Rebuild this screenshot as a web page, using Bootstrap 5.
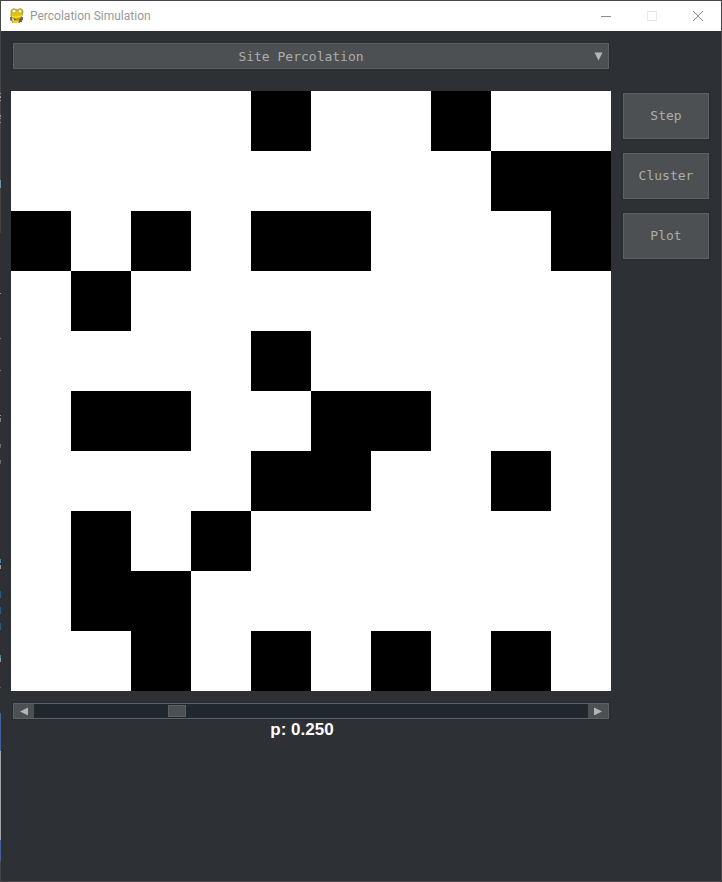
<!DOCTYPE html>
<html lang="en">
<head>
<meta charset="utf-8">
<meta name="viewport" content="width=device-width, initial-scale=1">
<title>Percolation Simulation</title>
<link href="https://cdn.jsdelivr.net/npm/bootstrap@5.3.0/dist/css/bootstrap.min.css" rel="stylesheet">
<style>
  :root { --panel: #2d3034; --control: #4c5052; --edge: #5d6163; --ink: #adadad; }
  .app-window { background: var(--panel); border: 1px solid #46464a; }
  /* desktop showing along the window's left edge */
  .app-window::before {
    content: ""; position: absolute; left: -1px; top: -1px; bottom: -1px; width: 1px;
    background: linear-gradient(#46464a 93px, #9a9a98 93px 94px, #46464a 94px 96px, #9a9a98 96px 98px, #46464a 98px 100px,
      #9a9a98 100px 101px, #46464a 101px 115px, #8d8d8a 115px 117px, #46464a 117px 118px, #8d8d8a 118px 119px, #46464a 119px 122px, #8d8d8a 122px 123px,
      #46464a 123px 180px, #7396a0 180px 188px, #444 188px 233px, #302f32 233px 293px, #999 293px 294px,
      #302f32 294px 338px, #8b8463 338px 339px, #302f32 339px 370px, #8b8463 370px 371px, #302f32 371px 415px, #999 415px 416px,
      #302f32 416px 418px, #a08058 418px 420px, #3f86ad 420px 422px, #302f32 422px 444px, #3f7fb5 444px 446px, #8a5535 446px 448px,
      #302f32 448px 460px, #3f7fb5 460px 462px, #8a5535 462px 464px, #302f32 464px 559px, #3f86ad 559px 563px, #302f32 563px 565px,
      #999 565px 569px, #302f32 569px 591px, #2c5c88 591px 598px, #302f32 598px 607px, #2c5c88 607px 614px, #302f32 614px 623px,
      #2c5c88 623px 630px, #302f32 630px 655px, #3f86ad 655px 658px, #999 658px 662px, #302f32 662px 687px, #8a5535 687px 688px,
      #302f32 688px 713px, #47629a 713px 751px, #a5a5a5 751px 840px, #47629a 840px 861px, #46464a 861px);
  }
  .title-bar { height: 30px; font: 12px/30px Roboto, sans-serif; color: #999; padding-left: 8px; }
  .app-icon { width: 16px; height: 16px; margin-right: 5px; }
  .caption-btn { width: 46px; height: 30px; color: #8c8c8c; }
  .caption-btn:disabled { color: #e6e6e6; opacity: 1; border: 0; }
  .workspace { padding: 12px 12px 12px 10px; gap: 12px; }
  .inset-row { margin: 0 2px; }
  .control { background: var(--control); border: 1px solid var(--edge); color: var(--ink); border-radius: 0;
    font: 13px/16px "DejaVu Sans Mono", monospace; box-shadow: 0 0 1px 1px #292c30; }
  .mode-select { appearance: none; height: 26px; padding: 1px 20px 0 0; text-align: center; text-align-last: center; }
  .mode-arrow { right: 6px; top: 9px; pointer-events: none; fill: #b5b5b5; }
  .lattice { display: grid; grid-template-columns: repeat(10, 1fr); aspect-ratio: 1; background: #fff; margin: 22px 0 12px; }
  .lattice i { background: #fff; }
  .lattice i.blocked { background: #000; }
  .side-buttons { width: 86px; gap: 14px; padding-top: 50px; }
  .side-buttons .control { height: 46px; }
  .slider-box { height: 16px; border: 1px solid var(--edge); background: #21282d; box-shadow: 0 0 1px 1px #292c30; }
  .arrow-btn { width: 20px; background: var(--control); fill: #b5b5b5; }
  .prob-slider { appearance: none; min-width: 0; height: 14px; background: #21282d; margin: 0; }
  .prob-slider::-webkit-slider-thumb { appearance: none; width: 18px; height: 12px; background: var(--control); border: 1px solid var(--edge); border-radius: 0; }
  .prob-slider::-moz-range-thumb { width: 18px; height: 12px; background: var(--control); border: 1px solid var(--edge); border-radius: 0; box-sizing: border-box; }
  .prob-label { font: bold 17px/22px "Liberation Sans", Arial, sans-serif; color: #fff; padding-right: 18px; }
</style>
<script src="https://cdn.jsdelivr.net/npm/bootstrap@5.3.0/dist/js/bootstrap.bundle.min.js"></script>
</head>
<body>
<div class="app-window position-relative d-flex flex-column min-vh-100">
  <header class="title-bar d-flex align-items-center bg-white">
    <svg class="app-icon" viewBox="0 0 16 16" aria-hidden="true">
      <path d="M3 10l-2-1v3l3 2zM10 10l4-1-1 4-3 1z" fill="#777468"/>
      <path d="M4 10h7v5H3v-2h2z" fill="#c9a90c"/>
      <path d="M2 3q1-3 4-2l2 1 2-1q4-1 4 3l-1 4q-2 3-6 3T2 8z" fill="#e3c414" stroke="#99810d" stroke-width=".7"/>
      <circle cx="5" cy="3.2" r="2" fill="#f6f2ce" stroke="#a58d20" stroke-width=".6"/>
      <circle cx="11" cy="3.2" r="2" fill="#f6f2ce" stroke="#a58d20" stroke-width=".6"/>
      <path d="M3 7.500q5 2 10-.5v1q-5 3-10 .5z" fill="#fbea20"/>
      <path d="M1 9h2v2H1zM5 11h2v1H5zM12 9h2v3h-2z" fill="#6b6a62"/>
      <path d="M10 11h3v3h-3z" fill="#8a5248"/>
      <path d="M4 13h5v2H4z" fill="#f2d800"/>
    </svg>
    <span class="flex-grow-1">Percolation Simulation</span>
    <button type="button" class="caption-btn btn p-0 border-0 d-flex align-items-center justify-content-center" aria-label="Minimize">
      <svg width="10" height="10" stroke="currentColor" shape-rendering="crispEdges"><path d="M0 5.500h10"/></svg>
    </button>
    <button type="button" class="caption-btn btn p-0 border-0 d-flex align-items-center justify-content-center" aria-label="Maximize" disabled>
      <svg width="10" height="10" stroke="currentColor" fill="none" shape-rendering="crispEdges"><path d="M.5.5h9v9h-9z"/></svg>
    </button>
    <button type="button" class="caption-btn btn p-0 border-0 d-flex align-items-center justify-content-center" aria-label="Close">
      <svg width="10" height="10" stroke="currentColor"><path d="M0 0l10 10M10 0L0 10"/></svg>
    </button>
  </header>
  <main class="workspace d-flex align-items-start">
    <div class="flex-grow-1">
      <div class="inset-row position-relative">
        <select class="control mode-select d-block w-100" aria-label="Percolation type">
          <option>Site Percolation</option>
          <option>Bond Percolation</option>
        </select>
        <svg class="mode-arrow position-absolute" width="9" height="9" aria-hidden="true"><path d="M.5.5h8l-4 8z"/></svg>
      </div>
      <div class="lattice" id="lattice" role="img" aria-label="Site lattice"></div>
      <div class="slider-box inset-row d-flex">
        <button type="button" class="arrow-btn btn p-0 border-0 rounded-0 d-flex align-items-center justify-content-center" aria-label="Decrease p">
          <svg width="8" height="8"><path d="M0 4.500L8 .5v8z"/></svg>
        </button>
        <input type="range" class="prob-slider flex-grow-1" id="prob" min="0" max="1" step="0.01" value="0.25">
        <button type="button" class="arrow-btn btn p-0 border-0 rounded-0 d-flex align-items-center justify-content-center" aria-label="Increase p">
          <svg width="8" height="8"><path d="M8 4.500L0 .5v8z"/></svg>
        </button>
      </div>
      <label class="prob-label d-block text-center" for="prob">p: 0.250</label>
    </div>
    <div class="side-buttons d-flex flex-column flex-shrink-0">
      <button type="button" class="control btn p-0">Step</button>
      <button type="button" class="control btn p-0">Cluster</button>
      <button type="button" class="control btn p-0">Plot</button>
    </div>
  </main>
</div>
<script>
  const rows = [
    "....#..#..",
    "........##",
    "#.#.##...#",
    ".#........",
    "....#.....",
    ".##..##...",
    "....##..#.",
    ".#.#......",
    ".##.......",
    "..#.#.#.#."
  ];
  const lattice = document.getElementById("lattice");
  for (const site of rows.join("")) {
    const cell = document.createElement("i");
    if (site === "#") cell.className = "blocked";
    lattice.append(cell);
  }
</script>
</body>
</html>
